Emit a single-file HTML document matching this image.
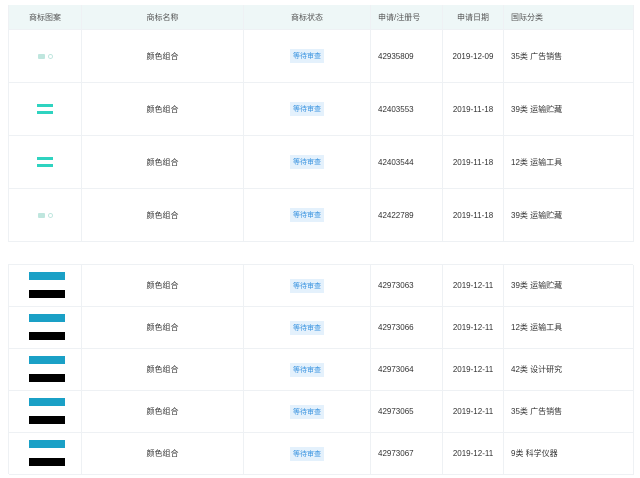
<!DOCTYPE html>
<html><head><meta charset="utf-8"><style>
*{margin:0;padding:0;box-sizing:border-box}
body{width:640px;height:478px;background:#fff;position:relative;overflow:hidden;font-family:"Liberation Sans","Noto Sans CJK SC",sans-serif;font-size:8px;color:#333}
.t{position:absolute;left:8px;width:625px}
.r{position:absolute;left:0;width:625px;border-bottom:1px solid #eef1f4}
.c{position:absolute;top:0;height:100%;display:flex;align-items:center;border-right:1px solid #eef1f4}
.hd{background:#eef7f7;color:#555}
.b{background:#e4f1fc;color:#3a94e0;padding:2px 3px;font-size:7px}
.bl{position:absolute;left:20px;width:36px;height:8px}
.g{width:16px;height:3px;background:#2fd3c0;margin:2px 0}
.f1{width:7px;height:5px;background:#bfe6de;border-radius:1px;margin-right:3px}
.f2{width:5px;height:5px;border:1px solid #bfe6de;border-radius:50%}
</style></head><body>
<div id="a"></div>
<script>
var cols=[[0,73,'c'],[73,162,'c'],[235,127,'c'],[362,72,'l'],[434,61,'c'],[495,130,'l']];
function row(top,h,cells,cls){
 var s='<div class="r '+(cls||'')+'" style="top:'+top+'px;height:'+h+'px">';
 cols.forEach(function(c,i){s+='<div class="c" style="left:'+c[0]+'px;width:'+c[1]+'px;justify-content:'+(c[2]=='c'?'center':'flex-start')+';padding-left:'+(c[2]=='c'?0:7)+'px">'+cells[i]+'</div>'});
 return s+'</div>';
}
var h='<div class="t" style="top:5px;height:237px;border-left:1px solid #eef1f4">';
h+=row(0,25,['商标图案','商标名称','商标状态','申请/注册号','申请日期','国际分类'],'hd');
var faint='<div style="display:flex;align-items:center"><div class="f1"></div><div class="f2"></div></div>';
var eq='<div style="display:flex;flex-direction:column;align-items:center"><div class="g"></div><div class="g"></div></div>';
var st='<span class="b">等待审查</span>';
var d1=[[faint,'42935809','2019-12-09','35类 广告销售'],[eq,'42403553','2019-11-18','39类 运输贮藏'],[eq,'42403544','2019-11-18','12类 运输工具'],[faint,'42422789','2019-11-18','39类 运输贮藏']];
d1.forEach(function(d,i){h+=row(25+i*53,53,[d[0],'颜色组合',st,d[1],d[2],d[3]])});
h+='</div>';
h+='<div class="t" style="top:264px;height:210px;border-left:1px solid #eef1f4;border-top:1px solid #eef1f4">';
var d2=[['42973063','39类 运输贮藏'],['42973066','12类 运输工具'],['42973064','42类 设计研究'],['42973065','35类 广告销售'],['42973067','9类 科学仪器']];
d2.forEach(function(d,i){
 var lg='<div style="position:relative;width:73px;height:42px"><div class="bl" style="top:7px;background:#1aa0c6"></div><div class="bl" style="top:25px;background:#000"></div></div>';
 h+=row(i*42,42,[lg,'颜色组合',st,d[0],'2019-12-11',d[1]]);
});
h+='</div>';
document.getElementById('a').innerHTML=h;
</script>
</body></html>
